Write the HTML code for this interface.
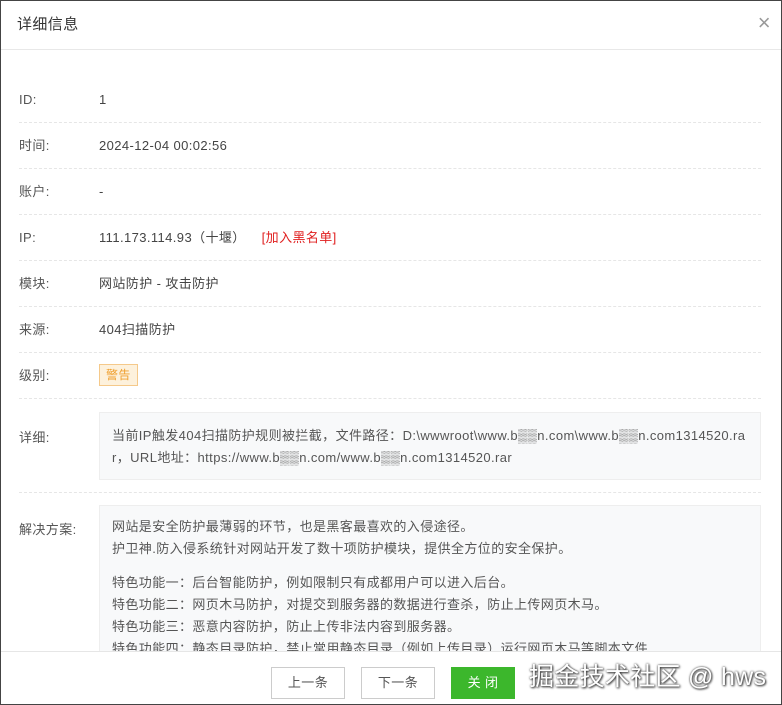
<!DOCTYPE html>
<html><head><meta charset="utf-8"><style>
*{margin:0;padding:0;box-sizing:border-box}
body{width:782px;height:705px;overflow:hidden;background:#fff;font-family:"Liberation Sans","Noto Sans CJK SC",sans-serif;font-size:13px;color:#555;letter-spacing:0.4px}
.wrap{position:absolute;left:0;top:0;width:782px;height:705px;border:1px solid #444;overflow:hidden}
.hd{position:absolute;left:0;top:0;width:780px;height:49px;border-bottom:1px solid #e8e8e8;font-size:15px;color:#333;padding:12px 0 0 16px}
.x{position:absolute;right:10px;top:12px;font-size:22px;color:#999;line-height:20px;font-weight:200}
.row{position:absolute;left:18px;width:742px;height:46px;border-bottom:1px dashed #e6e6e6}
.row .l{position:absolute;left:0;top:0;line-height:46px}
.row .v{position:absolute;left:80px;top:0;line-height:46px;color:#444}
.box{position:absolute;left:98px;width:662px;background:#f8f9fa;border:1px solid #eee;padding:12px 12px;line-height:22px;color:#555;word-break:break-all}
.lab{position:absolute;left:18px}
.ft{position:absolute;left:0;top:650px;width:780px;height:55px;border-top:1px solid #e6e6e6;background:#fff}
.btn{position:absolute;top:16px;height:32px;width:74px;border:1px solid #ccc;background:#fff;text-align:center;line-height:30px;color:#555;font-size:13px}
</style></head><body><div class="wrap">
<div class="hd">详细信息<span class="x">×</span></div>
<div class="row" style="top:76px"><span class="l">ID:</span><span class="v">1</span></div>
<div class="row" style="top:122px"><span class="l">时间:</span><span class="v">2024-12-04 00:02:56</span></div>
<div class="row" style="top:168px"><span class="l">账户:</span><span class="v">-</span></div>
<div class="row" style="top:214px"><span class="l">IP:</span><span class="v">111.173.114.93（十堰）<span style="color:#e02020;margin-left:16px">[加入黑名单]</span></span></div>
<div class="row" style="top:260px"><span class="l">模块:</span><span class="v">网站防护 - 攻击防护</span></div>
<div class="row" style="top:306px"><span class="l">来源:</span><span class="v">404扫描防护</span></div>
<div class="row" style="top:352px"><span class="l">级别:</span><span class="v"><span style="display:inline-block;background:#fdf1dc;border:1px solid #f5c98a;color:#f0a030;line-height:20px;padding:0 6px;font-size:12px;vertical-align:middle;margin-top:-3px">警告</span></span></div>
<span class="lab" style="top:426px">详细:</span>
<div class="box" style="top:411px;height:68px">当前IP触发404扫描防护规则被拦截，文件路径：D:\wwwroot\www.b▒▒n.com\www.b▒▒n.com1314520.rar，URL地址：https://www.b▒▒n.com/www.b▒▒n.com1314520.rar</div>
<div style="position:absolute;left:18px;top:491px;width:742px;border-top:1px dashed #e6e6e6"></div>
<span class="lab" style="top:518px">解决方案:</span>
<div class="box" style="top:504px;height:200px;padding-top:10px">网站是安全防护最薄弱的环节，也是黑客最喜欢的入侵途径。<br>护卫神.防入侵系统针对网站开发了数十项防护模块，提供全方位的安全保护。<br><div style="height:12px"></div>特色功能一：后台智能防护，例如限制只有成都用户可以进入后台。<br>特色功能二：网页木马防护，对提交到服务器的数据进行查杀，防止上传网页木马。<br>特色功能三：恶意内容防护，防止上传非法内容到服务器。<br>特色功能四：静态目录防护，禁止常用静态目录（例如上传目录）运行网页木马等脚本文件</div>
<div class="ft">
<div class="btn" style="left:270px;top:15px">上一条</div>
<div class="btn" style="left:360px;top:15px">下一条</div>
<div class="btn" style="left:450px;top:15px;width:64px;background:#3cb72c;border-color:#3cb72c;color:#fff">关 闭</div>
<div style="position:absolute;left:528px;top:5px;font-size:25px;letter-spacing:0.3px;color:#fff;text-shadow:0 0 2px #333,1px 1px 2px #333">掘金技术社区 @ hws</div>
</div>
</div></body></html>
